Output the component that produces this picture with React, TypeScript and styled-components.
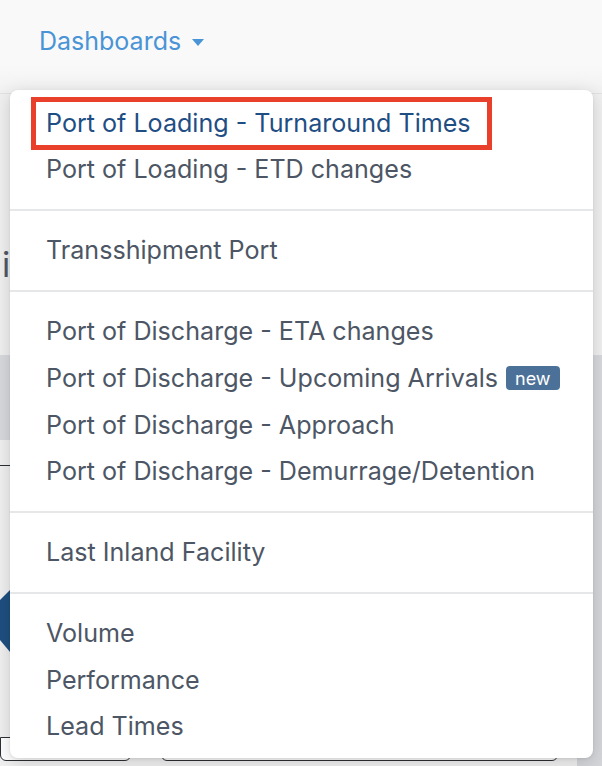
import React from "react";
import styled, { createGlobalStyle } from "styled-components";

const GlobalStyle = createGlobalStyle`
  html, body {
    margin: 0;
    padding: 0;
    background: #f0f0f1;
    font-family: Inter, "Noto Sans", sans-serif;
  }
  *, *::before, *::after { box-sizing: border-box; }
`;

const Page = styled.div`
  position: relative;
  width: 602px;
  height: 766px;
  overflow: hidden;
  display: flex;
  flex-direction: column;
`;

const Navbar = styled.header`
  height: 94px;
  flex-shrink: 0;
  display: flex;
  align-items: center;
  padding: 0 0 12px 39px;
  background: linear-gradient(#f9f9f9 70%, #f1f1f1);
  border-bottom: 1px solid #e2e2e3;
`;

const NavLink = styled.a`
  display: flex;
  align-items: center;
  gap: 11px;
  color: #4a94d6;
  font-size: 25px;
  text-decoration: none;
`;

const Caret = styled.span`
  width: 0;
  height: 0;
  border-left: 6.5px solid transparent;
  border-right: 6.5px solid transparent;
  border-top: 7px solid #4a94d6;
  margin-top: 3px;
`;

const TitleRow = styled.div`
  height: 261px;
  display: flex;
  align-items: flex-end;
  padding: 0 0 70px 2px;
  font-size: 34px;
  color: #4f5864;
`;

const Band = styled.div`
  height: 85px;
  background: #d7d9dd;
`;

const Lower = styled.div`
  flex: 1;
  display: flex;
`;

const LowerMain = styled.div`
  flex: 1;
  display: flex;
  flex-direction: column;
  padding-top: 25px;
`;

const Sidebar = styled.div`
  width: 25px;
  background: #d4d6da;
`;

const InputBox = styled.div`
  height: 40px;
  border-top: 1px solid #2c2f33;
`;

const Chart = styled.div`
  margin-top: 85px;
  height: 120px;
`;

const BottomRow = styled.div`
  margin-top: auto;
  display: flex;
  gap: 30px;
  padding-bottom: 5px;
`;

const FieldBox = styled.div<{ $w: number }>`
  width: ${(p) => p.$w}px;
  height: 24px;
  background: #fff;
  border: 1.5px solid #2c2f33;
  border-radius: 0 0 6px 6px;
`;

const Menu = styled.nav`
  position: absolute;
  top: 90px;
  left: 10px;
  width: 583px;
  padding: 9.5px 0 8px;
  background: #fff;
  border-radius: 8px;
  box-shadow: 0 4px 18px rgba(0, 0, 0, 0.16), 0 1px 3px rgba(0, 0, 0, 0.08);
`;

const Item = styled.a<{ $active?: boolean }>`
  position: relative;
  display: flex;
  align-items: center;
  gap: 8px;
  height: 46.6px;
  padding-left: 36px;
  font-size: 25.1px;
  color: ${(p) => (p.$active ? "#1f4e84" : "#4d5664")};
  text-decoration: none;
  white-space: nowrap;

  ${(p) =>
    p.$active &&
    `
    &::after {
      content: "";
      position: absolute;
      left: 21px;
      top: -2.5px;
      width: 461px;
      height: 53px;
      border: 5px solid #e8402a;
    }
  `}
`;

const Badge = styled.span`
  display: inline-flex;
  align-items: center;
  height: 24px;
  padding: 0 9px;
  border-radius: 4px;
  background: #4c7199;
  color: #fff;
  font-size: 18px;
  margin-top: 1px;
`;

const Divider = styled.hr`
  margin: 16.2px 0;
  border: 0;
  border-top: 2px solid #e6e7e8;
`;

const groups: { label: string; active?: boolean; badge?: string }[][] = [
  [
    { label: "Port of Loading - Turnaround Times", active: true },
    { label: "Port of Loading - ETD changes" },
  ],
  [{ label: "Transshipment Port" }],
  [
    { label: "Port of Discharge - ETA changes" },
    { label: "Port of Discharge - Upcoming Arrivals", badge: "new" },
    { label: "Port of Discharge - Approach" },
    { label: "Port of Discharge - Demurrage/Detention" },
  ],
  [{ label: "Last Inland Facility" }],
  [{ label: "Volume" }, { label: "Performance" }, { label: "Lead Times" }],
];

export default function App() {
  return (
    <Page>
      <GlobalStyle />
      <Navbar>
        <NavLink href="#">
          Dashboards
          <Caret />
        </NavLink>
      </Navbar>
      <TitleRow>i</TitleRow>
      <Band />
      <Lower>
        <LowerMain>
          <InputBox />
          <Chart>
            <svg width="60" height="70" viewBox="0 0 60 70">
              <path d="M0 10 L10 0 L10 62 L0 50 Z" fill="#1f4f80" />
            </svg>
          </Chart>
          <BottomRow>
            <FieldBox $w={131} />
            <FieldBox $w={397} />
          </BottomRow>
        </LowerMain>
        <Sidebar />
      </Lower>

      <Menu>
        {groups.map((g, gi) => (
          <React.Fragment key={gi}>
            {gi > 0 && <Divider />}
            {g.map((it) => (
              <Item key={it.label} href="#" $active={it.active}>
                {it.label}
                {it.badge && <Badge>{it.badge}</Badge>}
              </Item>
            ))}
          </React.Fragment>
        ))}
      </Menu>
    </Page>
  );
}
